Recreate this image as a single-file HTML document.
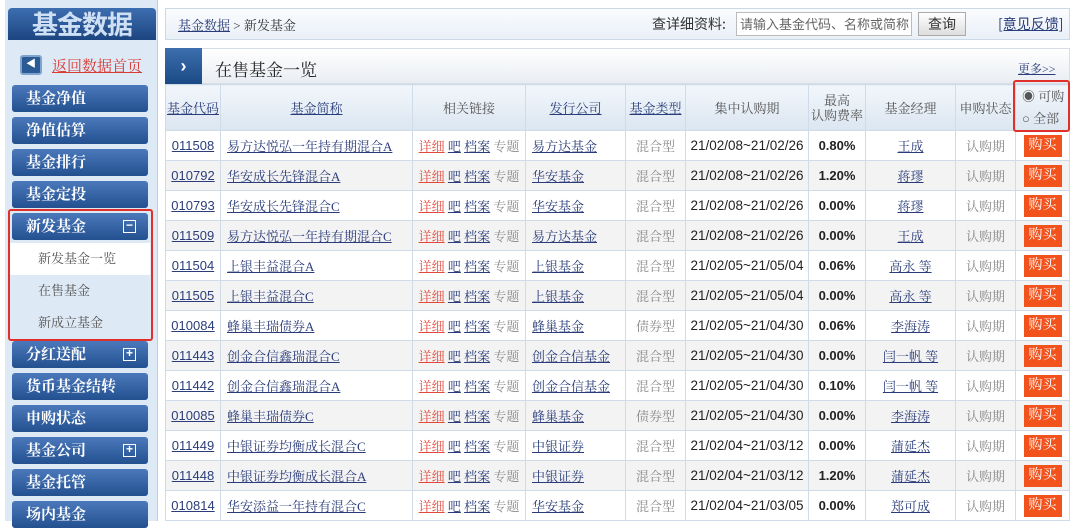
<!DOCTYPE html><html><head><meta charset="utf-8"><style>
*{margin:0;padding:0;box-sizing:border-box}
body{width:1080px;height:521px;overflow:hidden;background:#fff;font-family:"Liberation Serif","Noto Serif CJK SC",serif;font-size:13px;color:#333;position:relative}
.ab{position:absolute}
.side{left:5px;top:0;width:153px;height:521px;background:#dde9f5;border-right:1px solid #b9cde3}
.logo{left:8px;top:8px;width:148px;height:32px;background:linear-gradient(#3d6eb0,#1c4580);border-radius:4px 4px 0 0;color:#cfe0f5;font:bold 26px "Noto Sans CJK SC",sans-serif;text-align:center;line-height:32px;letter-spacing:-1px}
.btn{left:12px;width:136px;height:27px;background:linear-gradient(#4b79bb,#23508f);border-radius:3px;color:#fff;font:bold 15px "Noto Serif CJK SC",serif;line-height:26px;padding-left:14px}
.pl{position:absolute;right:12px;top:7px;width:13px;height:13px;border:1.5px solid #fff;font:bold 12px sans-serif;line-height:9px;text-align:center}
.sub{left:10px;width:140px;height:32px;line-height:32px;padding-left:28px;color:#555;font-size:13px}
a{color:#2a3d7a;text-decoration:underline}
table{border-collapse:collapse;position:absolute;left:165px;top:84px;width:904px;table-layout:fixed}
td,th{border:1px solid #cfdbe8;height:30px;text-align:center;font-weight:normal;font-size:13px;white-space:nowrap;overflow:hidden;vertical-align:middle}
th{height:46px;background:linear-gradient(#f2f6fb,#dbe6f1);color:#555}
tr:nth-child(odd) td{background:#f3f3f3}
.n{font-family:"Liberation Sans",sans-serif;font-size:13px;color:#222}
.d{font-family:"Liberation Sans",sans-serif;font-size:13.5px;color:#222}
.r{color:#e4493d}.g{color:#888}
.buy{display:inline-block;background:#f2521c;color:#fff;width:38px;height:22px;line-height:22px;font-size:14px;vertical-align:middle}
</style></head><body>
<div class="ab side"></div>
<div class="ab logo">基金数据</div>
<div class="ab" style="left:20px;top:55px;width:22px;height:20px;background:#2b5b94;border:2px solid #7fa3cc;border-radius:3px;color:#fff;font-size:10px;text-align:center;line-height:16px">◀</div>
<div class="ab" style="left:52px;top:55px;font-size:15px"><a style="color:#d93a34">返回数据首页</a></div>
<div class="ab btn" style="top:85px">基金净值</div>
<div class="ab btn" style="top:117px">净值估算</div>
<div class="ab btn" style="top:149px">基金排行</div>
<div class="ab btn" style="top:181px">基金定投</div>
<div class="ab btn" style="top:213px">新发基金<span class="pl">−</span></div>
<div class="ab sub" style="top:243px;background:#fff">新发基金一览</div>
<div class="ab sub" style="top:275px">在售基金</div>
<div class="ab sub" style="top:307px">新成立基金</div>
<div class="ab" style="left:8px;top:209px;width:145px;height:132px;border:2.5px solid #e0302a;border-radius:3px"></div>
<div class="ab btn" style="top:341px">分红送配<span class="pl">+</span></div>
<div class="ab btn" style="top:373px">货币基金结转</div>
<div class="ab btn" style="top:405px">申购状态</div>
<div class="ab btn" style="top:437px">基金公司<span class="pl">+</span></div>
<div class="ab btn" style="top:469px">基金托管</div>
<div class="ab btn" style="top:501px">场内基金</div>

<div class="ab" style="left:165px;top:8px;width:905px;height:32px;background:linear-gradient(#fafcfe,#eaf0f7);border:1px solid #cbd8e6"></div>
<div class="ab" style="left:178px;top:15px;font-size:13px"><a>基金数据</a> &gt; 新发基金</div>
<div class="ab" style="left:652px;top:14px;font-size:14px;font-family:'Noto Sans CJK SC',sans-serif">查详细资料:</div>
<div class="ab" style="left:736px;top:12px;width:176px;height:24px;border:1px solid #bbb;background:#fff;color:#666;font:13px 'Noto Sans CJK SC',sans-serif;line-height:22px;padding-left:3px;white-space:nowrap;overflow:hidden">请输入基金代码、名称或简称</div>
<div class="ab" style="left:918px;top:12px;width:48px;height:24px;border:1px solid #aaa;background:linear-gradient(#fff,#ddd);font:14px 'Noto Sans CJK SC',sans-serif;text-align:center;line-height:22px">查询</div>
<div class="ab" style="left:998px;top:14px;font:14px 'Noto Sans CJK SC',sans-serif"><a>[意见反馈]</a></div>

<div class="ab" style="left:165px;top:48px;width:905px;height:36px;background:linear-gradient(#fff,#e9edf2);border:1px solid #d7dee7"></div>
<div class="ab" style="left:165px;top:48px;width:37px;height:36px;background:linear-gradient(#3d6fae,#1b4a85);color:#fff;font:bold 18px sans-serif;text-align:center;line-height:36px">›</div>
<div class="ab" style="left:215px;top:56px;font-size:17px;color:#222">在售基金一览</div>
<div class="ab" style="left:1018px;top:60px;font-size:12px"><a>更多&gt;&gt;</a></div>

<table>
<colgroup><col style="width:55px"><col style="width:192px"><col style="width:113px"><col style="width:100px"><col style="width:60px"><col style="width:123px"><col style="width:57px"><col style="width:90px"><col style="width:60px"><col style="width:54px"></colgroup>
<tr><th><a>基金代码</a></th><th><a>基金简称</a></th><th>相关链接</th><th><a>发行公司</a></th><th><a>基金类型</a></th><th>集中认购期</th><th style="line-height:15px">最高<br>认购费率</th><th>基金经理</th><th>申购状态</th><th style="text-align:left;padding-left:6px;line-height:22px">◉ 可购<br>○ 全部</th></tr>
<tr><td class="n"><a>011508</a></td><td style="text-align:left;padding-left:6px"><a>易方达悦弘一年持有期混合A</a></td><td><a class="r">详细</a> <a>吧</a> <a>档案</a> <span class="g">专题</span></td><td style="text-align:left;padding-left:6px"><a>易方达基金</a></td><td class="g">混合型</td><td class="d">21/02/08~21/02/26</td><td class="n"><b>0.80%</b></td><td><a>王成</a></td><td class="g">认购期</td><td><span class="buy">购买</span></td></tr>
<tr><td class="n"><a>010792</a></td><td style="text-align:left;padding-left:6px"><a>华安成长先锋混合A</a></td><td><a class="r">详细</a> <a>吧</a> <a>档案</a> <span class="g">专题</span></td><td style="text-align:left;padding-left:6px"><a>华安基金</a></td><td class="g">混合型</td><td class="d">21/02/08~21/02/26</td><td class="n"><b>1.20%</b></td><td><a>蒋璆</a></td><td class="g">认购期</td><td><span class="buy">购买</span></td></tr>
<tr><td class="n"><a>010793</a></td><td style="text-align:left;padding-left:6px"><a>华安成长先锋混合C</a></td><td><a class="r">详细</a> <a>吧</a> <a>档案</a> <span class="g">专题</span></td><td style="text-align:left;padding-left:6px"><a>华安基金</a></td><td class="g">混合型</td><td class="d">21/02/08~21/02/26</td><td class="n"><b>0.00%</b></td><td><a>蒋璆</a></td><td class="g">认购期</td><td><span class="buy">购买</span></td></tr>
<tr><td class="n"><a>011509</a></td><td style="text-align:left;padding-left:6px"><a>易方达悦弘一年持有期混合C</a></td><td><a class="r">详细</a> <a>吧</a> <a>档案</a> <span class="g">专题</span></td><td style="text-align:left;padding-left:6px"><a>易方达基金</a></td><td class="g">混合型</td><td class="d">21/02/08~21/02/26</td><td class="n"><b>0.00%</b></td><td><a>王成</a></td><td class="g">认购期</td><td><span class="buy">购买</span></td></tr>
<tr><td class="n"><a>011504</a></td><td style="text-align:left;padding-left:6px"><a>上银丰益混合A</a></td><td><a class="r">详细</a> <a>吧</a> <a>档案</a> <span class="g">专题</span></td><td style="text-align:left;padding-left:6px"><a>上银基金</a></td><td class="g">混合型</td><td class="d">21/02/05~21/05/04</td><td class="n"><b>0.06%</b></td><td><a>高永 等</a></td><td class="g">认购期</td><td><span class="buy">购买</span></td></tr>
<tr><td class="n"><a>011505</a></td><td style="text-align:left;padding-left:6px"><a>上银丰益混合C</a></td><td><a class="r">详细</a> <a>吧</a> <a>档案</a> <span class="g">专题</span></td><td style="text-align:left;padding-left:6px"><a>上银基金</a></td><td class="g">混合型</td><td class="d">21/02/05~21/05/04</td><td class="n"><b>0.00%</b></td><td><a>高永 等</a></td><td class="g">认购期</td><td><span class="buy">购买</span></td></tr>
<tr><td class="n"><a>010084</a></td><td style="text-align:left;padding-left:6px"><a>蜂巢丰瑞债券A</a></td><td><a class="r">详细</a> <a>吧</a> <a>档案</a> <span class="g">专题</span></td><td style="text-align:left;padding-left:6px"><a>蜂巢基金</a></td><td class="g">债券型</td><td class="d">21/02/05~21/04/30</td><td class="n"><b>0.06%</b></td><td><a>李海涛</a></td><td class="g">认购期</td><td><span class="buy">购买</span></td></tr>
<tr><td class="n"><a>011443</a></td><td style="text-align:left;padding-left:6px"><a>创金合信鑫瑞混合C</a></td><td><a class="r">详细</a> <a>吧</a> <a>档案</a> <span class="g">专题</span></td><td style="text-align:left;padding-left:6px"><a>创金合信基金</a></td><td class="g">混合型</td><td class="d">21/02/05~21/04/30</td><td class="n"><b>0.00%</b></td><td><a>闫一帆 等</a></td><td class="g">认购期</td><td><span class="buy">购买</span></td></tr>
<tr><td class="n"><a>011442</a></td><td style="text-align:left;padding-left:6px"><a>创金合信鑫瑞混合A</a></td><td><a class="r">详细</a> <a>吧</a> <a>档案</a> <span class="g">专题</span></td><td style="text-align:left;padding-left:6px"><a>创金合信基金</a></td><td class="g">混合型</td><td class="d">21/02/05~21/04/30</td><td class="n"><b>0.10%</b></td><td><a>闫一帆 等</a></td><td class="g">认购期</td><td><span class="buy">购买</span></td></tr>
<tr><td class="n"><a>010085</a></td><td style="text-align:left;padding-left:6px"><a>蜂巢丰瑞债券C</a></td><td><a class="r">详细</a> <a>吧</a> <a>档案</a> <span class="g">专题</span></td><td style="text-align:left;padding-left:6px"><a>蜂巢基金</a></td><td class="g">债券型</td><td class="d">21/02/05~21/04/30</td><td class="n"><b>0.00%</b></td><td><a>李海涛</a></td><td class="g">认购期</td><td><span class="buy">购买</span></td></tr>
<tr><td class="n"><a>011449</a></td><td style="text-align:left;padding-left:6px"><a>中银证券均衡成长混合C</a></td><td><a class="r">详细</a> <a>吧</a> <a>档案</a> <span class="g">专题</span></td><td style="text-align:left;padding-left:6px"><a>中银证券</a></td><td class="g">混合型</td><td class="d">21/02/04~21/03/12</td><td class="n"><b>0.00%</b></td><td><a>蒲延杰</a></td><td class="g">认购期</td><td><span class="buy">购买</span></td></tr>
<tr><td class="n"><a>011448</a></td><td style="text-align:left;padding-left:6px"><a>中银证券均衡成长混合A</a></td><td><a class="r">详细</a> <a>吧</a> <a>档案</a> <span class="g">专题</span></td><td style="text-align:left;padding-left:6px"><a>中银证券</a></td><td class="g">混合型</td><td class="d">21/02/04~21/03/12</td><td class="n"><b>1.20%</b></td><td><a>蒲延杰</a></td><td class="g">认购期</td><td><span class="buy">购买</span></td></tr>
<tr><td class="n"><a>010814</a></td><td style="text-align:left;padding-left:6px"><a>华安添益一年持有混合C</a></td><td><a class="r">详细</a> <a>吧</a> <a>档案</a> <span class="g">专题</span></td><td style="text-align:left;padding-left:6px"><a>华安基金</a></td><td class="g">混合型</td><td class="d">21/02/04~21/03/05</td><td class="n"><b>0.00%</b></td><td><a>郑可成</a></td><td class="g">认购期</td><td><span class="buy">购买</span></td></tr>
</table>
<div class="ab" style="left:1013px;top:80px;width:57px;height:52px;border:2.5px solid #e0302a;border-radius:3px"></div>
</body></html>
